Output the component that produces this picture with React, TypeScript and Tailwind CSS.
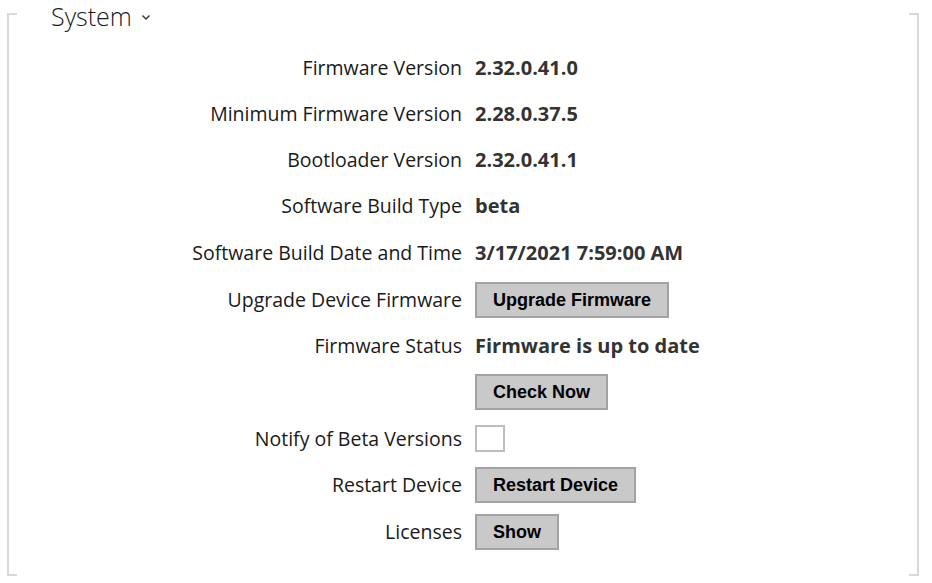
import React from "react";

const labelCls = "text-right text-[19.5px] text-[#1a1a1a] leading-none";
const valueCls = "text-[20px] font-bold text-[#333] leading-none";

function Btn({ children }: { children: React.ReactNode }) {
  return (
    <button
      className="h-[36px] px-[16px] bg-[#c9c9c9] border-2 border-[#a3a3a3] text-[18px] font-bold text-black leading-none"
      style={{ fontFamily: '"Liberation Sans", Arial, sans-serif' }}
    >
      {children}
    </button>
  );
}

function Row({ label, children, h = 46 }: { label?: string; children: React.ReactNode; h?: number }) {
  return (
    <div className="flex items-center gap-[13px]" style={{ height: h }}>
      <div className={labelCls + " w-[462px] shrink-0"}>{label}</div>
      <div className="flex items-center">{children}</div>
    </div>
  );
}

export default function App() {
  return (
    <div
      className="w-[932px] h-[583px] bg-white overflow-hidden"
      style={{ fontFamily: '"Open Sans", "Noto Sans", sans-serif' }}
    >
      <div className="relative ml-[7px] mt-[13px] w-[912px] h-[563px] border-l-2 border-r-2 border-[#d9d9d9]">
        <div className="absolute left-0 top-0 w-[8px] h-[2px] bg-[#d9d9d9]" />
        <div className="absolute right-0 top-0 w-[8px] h-[2px] bg-[#d9d9d9]" />
        <div className="absolute left-0 bottom-0 w-[8px] h-[2px] bg-[#d9d9d9]" />
        <div className="absolute right-0 bottom-0 w-[8px] h-[2px] bg-[#d9d9d9]" />
        <div className="absolute left-[40px] top-[-13px] flex items-center gap-[9px] bg-white px-[2px]">
          <span className="text-[25px] font-light text-[#1a1a1a] leading-[32px]">System</span>
          <svg width="10" height="7" viewBox="0 0 10 7" className="mt-[3px]">
            <path d="M1.5 1.5 L5 5 L8.5 1.5" fill="none" stroke="#333" strokeWidth="1.4" />
          </svg>
        </div>
        <div className="ml-[-9px] pt-[32px] flex flex-col">
          <Row label="Firmware Version"><span className={valueCls}>2.32.0.41.0</span></Row>
          <Row label="Minimum Firmware Version"><span className={valueCls}>2.28.0.37.5</span></Row>
          <Row label="Bootloader Version"><span className={valueCls}>2.32.0.41.1</span></Row>
          <Row label="Software Build Type"><span className={valueCls}>beta</span></Row>
          <Row label="Software Build Date and Time" h={47}><span className={valueCls}>3/17/2021 7:59:00 AM</span></Row>
          <Row label="Upgrade Device Firmware" h={47}><Btn>Upgrade Firmware</Btn></Row>
          <Row label="Firmware Status"><span className={valueCls}>Firmware is up to date</span></Row>
          <Row label="" h={46}><Btn>Check Now</Btn></Row>
          <Row label="Notify of Beta Versions" h={47}>
            <div className="w-[30px] h-[27px] border-2 border-[#bdbdbd] bg-white" />
          </Row>
          <Row label="Restart Device" h={46}><Btn>Restart Device</Btn></Row>
          <Row label="Licenses" h={47}><Btn>Show</Btn></Row>
        </div>
      </div>
    </div>
  );
}
